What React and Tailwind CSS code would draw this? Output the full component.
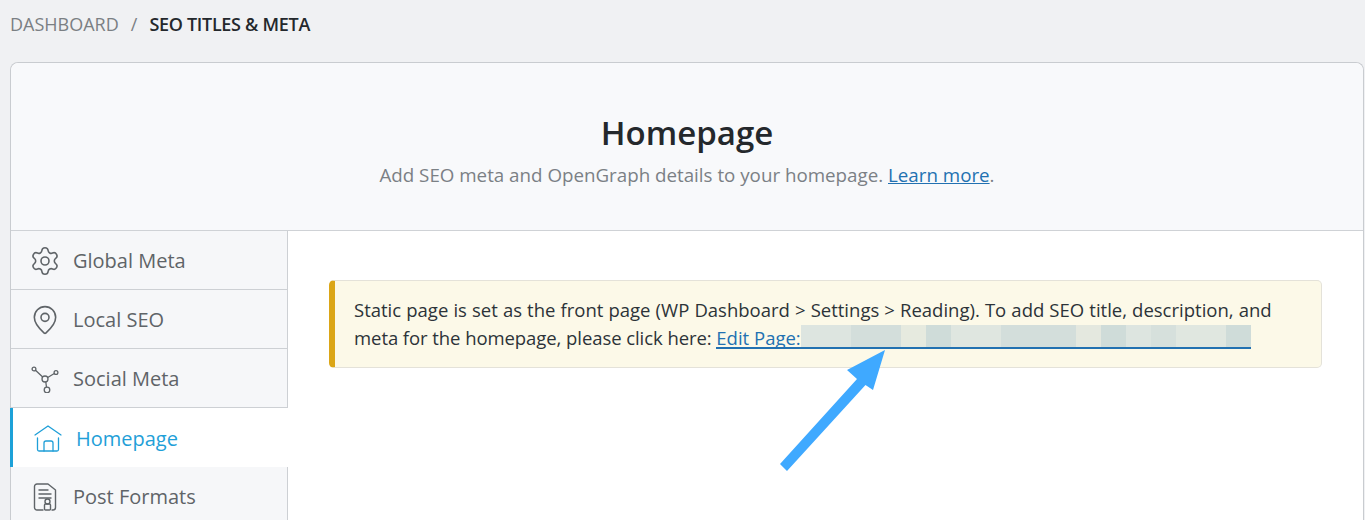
import React from 'react';
import { Settings, MapPin } from 'lucide-react';

const SocialIcon = ({ className }) => (
  <svg viewBox="0 0 28 28" fill="none" stroke="currentColor" strokeWidth="1.3" className={className}>
    <circle cx="3" cy="4" r="1.9" />
    <circle cx="25" cy="7.5" r="1.9" />
    <circle cx="14" cy="14" r="3" />
    <circle cx="16" cy="25" r="2.8" />
    <path d="M4.5 5.3l7.2 6.6M23.3 8.5l-6.6 4M14.8 17l.7 5.2" />
  </svg>
);

const HomeIcon = ({ className }) => (
  <svg viewBox="0 0 28 28" fill="none" stroke="currentColor" strokeWidth="1.3" strokeLinecap="round" strokeLinejoin="round" className={className}>
    <path d="M1 10 14 1l13 9" />
    <path d="M3.5 13v11.5a1.5 1.5 0 0 0 1.5 1.5h18a1.5 1.5 0 0 0 1.5-1.5V13" />
    <path d="M10 26v-8a2 2 0 0 1 2-2h5a2 2 0 0 1 2 2v8" />
  </svg>
);

const PostIcon = ({ className }) => (
  <svg viewBox="0 0 24 28" fill="none" stroke="currentColor" strokeWidth="1.4" strokeLinecap="round" strokeLinejoin="round" className={className}>
    <path d="M10 27H4a2.5 2.5 0 0 1-2.5-2.5v-21A2.5 2.5 0 0 1 4 1h11l7.5 6v17.5A2.5 2.5 0 0 1 20 27h-1" />
    <path d="M6 7h9M6 11h12M6 15h12" />
    <rect x="11.5" y="21" width="6" height="6" rx="1" />
    <circle cx="14.5" cy="18.5" r="2.5" />
  </svg>
);

const tabs = [
  { label: 'Global Meta', icon: <Settings className="-mx-[2px] h-8 w-8" strokeWidth={1.2} /> },
  { label: 'Local SEO', icon: <MapPin className="-mx-[2px] h-8 w-8" strokeWidth={1.2} /> },
  { label: 'Social Meta', icon: <SocialIcon className="w-7 h-7" /> },
  { label: 'Homepage', active: true, icon: <HomeIcon className="w-7 h-7" /> },
  { label: 'Post Formats', icon: <PostIcon className="w-7 h-7" /> },
];

// blurred-out page title in the notice
const blurCells = ['#dde5e0', '#dde5e0', '#d3dedb', '#d3dedb', '#e6eadf', '#cfdcd9', '#dfe6e0', '#dfe6e0', '#d3dedb', '#d3dedb', '#d3dedb', '#e4e8df', '#cfdcd9', '#dde5e0', '#d6e0dc', '#e0e7e0', '#e0e7e0', '#cfdcd9'];

export default function App() {
  return (
    <div className="h-[520px] overflow-hidden bg-[#f0f1f3] pl-[10px] pr-[1px] font-['Open_Sans','Noto_Sans',sans-serif] text-[#2c3338]">
      <div className="flex h-[62px] items-center pb-[13px] text-[18px]">
        <span className="text-[#7b7f83]">DASHBOARD</span>
        <span className="mx-[12px] text-[#7b7f83]">/</span>
        <span className="font-semibold tracking-[-0.3px] text-[#24282c]">SEO TITLES &amp; META</span>
      </div>

      <div className="rounded-t-[8px] border border-b-0 border-[#c9ccd0] bg-white">
        <div className="h-[168px] rounded-t-[8px] border-b border-[#cfd2d6] bg-[#f8f9fb] pt-[49px] text-center">
          <h1 className="text-[33px] leading-[42px] font-semibold text-[#24282c]">Homepage</h1>
          <p className="mt-[7px] text-[18.75px] leading-[28px] text-[#7b8085]">
            Add SEO meta and OpenGraph details to your homepage.{' '}
            <a className="text-[#2271b1] underline">Learn more</a>.
          </p>
        </div>

        <div className="flex">
          <div className="w-[277px] shrink-0">
            {tabs.map((tab) => (
              <div
                key={tab.label}
                className={tab.active
                  ? '-ml-px flex h-[59px] items-center gap-[14px] border-l-[3px] border-[#1da1d8] bg-white pt-[2px] pl-[21px] text-[#1f9fd8]'
                  : 'flex h-[59px] items-center gap-[14px] border-r border-b border-[#cdd0d4] bg-[#f6f7f9] pt-[2px] pl-[20px] text-[#5f6468]'}
              >
                {tab.icon}
                <span className="text-[20px]">{tab.label}</span>
              </div>
            ))}
          </div>

          <div className="flex-1 pt-[49px] pr-[41px] pl-[41px]">
            <div className="h-[88px] rounded-[5px] border border-l-[6px] border-[#e4e2d9] border-l-[#dba617] bg-[#fcf9e8] pt-[15px] pl-[19px] text-[18.5px] leading-[28px] text-[#2c3338]">
              <p className="whitespace-nowrap [word-spacing:0.3px]">Static page is set as the front page (WP Dashboard &gt; Settings &gt; Reading). To add SEO title, description, and</p>
              <p className="flex items-start whitespace-nowrap">
                <span className="tracking-[-0.07px]">meta for the homepage, please click here:&nbsp;</span>
                <a className="mt-px flex h-[24px] border-b-2 border-[#2271b1] text-[#2271b1]">
                  <span className="leading-[26px]">Edit Page:</span>
                  <span className="flex h-[22px] w-[450px]">
                    {blurCells.map((c, i) => (
                      <span key={i} className="flex-1" style={{ backgroundColor: c }} />
                    ))}
                  </span>
                </a>
              </p>
            </div>
          </div>
        </div>
      </div>

      <svg viewBox="0 0 1365 520" className="pointer-events-none absolute top-0 left-0 h-[520px] w-[1365px]">
        <path d="M885 350 873 390 865.5 385 787 471 780 464 857 379 847 370Z" fill="#3fa9ff" />
      </svg>
    </div>
  );
}
